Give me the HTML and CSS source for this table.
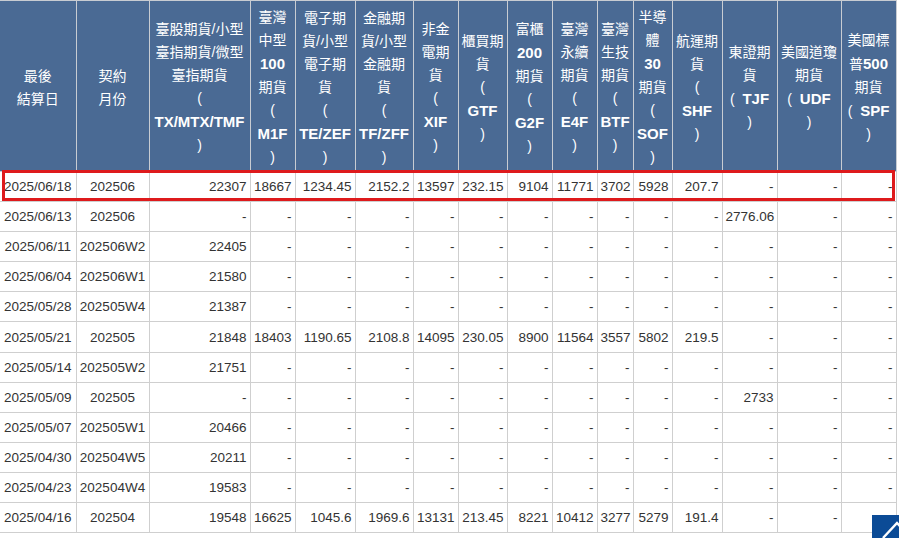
FILE: index.html
```html
<!DOCTYPE html>
<html lang="zh-Hant">
<head>
<meta charset="utf-8">
<title>最後結算價</title>
<link rel="stylesheet" href="styles.css">
</head>
<body>
<div class="wrap">
<table class="settle">
<colgroup>
<col class="w76"><col class="w73"><col class="w101"><col class="w45"><col class="w60"><col class="w58"><col class="w45"><col class="w49"><col class="w45"><col class="w45"><col class="w36"><col class="w39"><col class="w50"><col class="w55"><col class="w64"><col class="w55">
</colgroup>
<thead>
<tr class="head">
<th>最後<br>結算日</th>
<th>契約<br>月份</th>
<th>臺股期貨/小型<br>臺指期貨/微型<br>臺指期貨<br>(<br><b>TX/MTX/TMF</b><br>)</th>
<th>臺灣<br>中型<br><b>100</b><br>期貨<br>(<br><b>M1F</b><br>)</th>
<th>電子期<br>貨/小型<br>電子期<br>貨<br>(<br><b>TE/ZEF</b><br>)</th>
<th>金融期<br>貨/小型<br>金融期<br>貨<br>(<br><b>TF/ZFF</b><br>)</th>
<th>非金<br>電期<br>貨<br>(<br><b>XIF</b><br>)</th>
<th>櫃買期<br>貨<br>(<br><b>GTF</b><br>)</th>
<th>富櫃<br><b>200</b><br>期貨<br>(<br><b>G2F</b><br>)</th>
<th>臺灣<br>永續<br>期貨<br>(<br><b>E4F</b><br>)</th>
<th>臺灣<br>生技<br>期貨<br>(<br><b>BTF</b><br>)</th>
<th>半導<br>體<br><b>30</b><br>期貨<br>(<br><b>SOF</b><br>)</th>
<th>航運期<br>貨<br>(<br><b>SHF</b><br>)</th>
<th>東證期<br>貨<br>(&nbsp; <b>TJF</b><br>)</th>
<th>美國道瓊<br>期貨<br>(&nbsp; <b>UDF</b><br>)</th>
<th>美國標<br>普<b>500</b><br>期貨<br>(&nbsp; <b>SPF</b><br>)</th>
</tr>
</thead>
<tbody>
<tr><td class="ctr">2025/06/18</td><td class="ctr">202506</td><td>22307</td><td>18667</td><td>1234.45</td><td>2152.2</td><td>13597</td><td>232.15</td><td>9104</td><td>11771</td><td>3702</td><td>5928</td><td>207.7</td><td>-</td><td>-</td><td>-</td></tr>
<tr><td class="ctr">2025/06/13</td><td class="ctr">202506</td><td>-</td><td>-</td><td>-</td><td>-</td><td>-</td><td>-</td><td>-</td><td>-</td><td>-</td><td>-</td><td>-</td><td>2776.06</td><td>-</td><td>-</td></tr>
<tr><td class="ctr">2025/06/11</td><td class="ctr">202506W2</td><td>22405</td><td>-</td><td>-</td><td>-</td><td>-</td><td>-</td><td>-</td><td>-</td><td>-</td><td>-</td><td>-</td><td>-</td><td>-</td><td>-</td></tr>
<tr><td class="ctr">2025/06/04</td><td class="ctr">202506W1</td><td>21580</td><td>-</td><td>-</td><td>-</td><td>-</td><td>-</td><td>-</td><td>-</td><td>-</td><td>-</td><td>-</td><td>-</td><td>-</td><td>-</td></tr>
<tr><td class="ctr">2025/05/28</td><td class="ctr">202505W4</td><td>21387</td><td>-</td><td>-</td><td>-</td><td>-</td><td>-</td><td>-</td><td>-</td><td>-</td><td>-</td><td>-</td><td>-</td><td>-</td><td>-</td></tr>
<tr><td class="ctr">2025/05/21</td><td class="ctr">202505</td><td>21848</td><td>18403</td><td>1190.65</td><td>2108.8</td><td>14095</td><td>230.05</td><td>8900</td><td>11564</td><td>3557</td><td>5802</td><td>219.5</td><td>-</td><td>-</td><td>-</td></tr>
<tr><td class="ctr">2025/05/14</td><td class="ctr">202505W2</td><td>21751</td><td>-</td><td>-</td><td>-</td><td>-</td><td>-</td><td>-</td><td>-</td><td>-</td><td>-</td><td>-</td><td>-</td><td>-</td><td>-</td></tr>
<tr><td class="ctr">2025/05/09</td><td class="ctr">202505</td><td>-</td><td>-</td><td>-</td><td>-</td><td>-</td><td>-</td><td>-</td><td>-</td><td>-</td><td>-</td><td>-</td><td>2733</td><td>-</td><td>-</td></tr>
<tr><td class="ctr">2025/05/07</td><td class="ctr">202505W1</td><td>20466</td><td>-</td><td>-</td><td>-</td><td>-</td><td>-</td><td>-</td><td>-</td><td>-</td><td>-</td><td>-</td><td>-</td><td>-</td><td>-</td></tr>
<tr><td class="ctr">2025/04/30</td><td class="ctr">202504W5</td><td>20211</td><td>-</td><td>-</td><td>-</td><td>-</td><td>-</td><td>-</td><td>-</td><td>-</td><td>-</td><td>-</td><td>-</td><td>-</td><td>-</td></tr>
<tr><td class="ctr">2025/04/23</td><td class="ctr">202504W4</td><td>19583</td><td>-</td><td>-</td><td>-</td><td>-</td><td>-</td><td>-</td><td>-</td><td>-</td><td>-</td><td>-</td><td>-</td><td>-</td><td>-</td></tr>
<tr><td class="ctr">2025/04/16</td><td class="ctr">202504</td><td>19548</td><td>16625</td><td>1045.6</td><td>1969.6</td><td>13131</td><td>213.45</td><td>8221</td><td>10412</td><td>3277</td><td>5279</td><td>191.4</td><td>-</td><td>-</td><td>-</td></tr>
</tbody>
</table>
<div class="hl"></div>
</div>
<a class="totop" href="#top" aria-label="回到頂端"><svg width="45" height="45" viewBox="0 0 45 45"><path d="M11 23 L25 8 L39 23" fill="none" stroke="#fff" stroke-width="2.5"/></svg></a>
</body>
</html>
```
FILE: styles.css
```css
html, body {
  margin: 0;
  padding: 0;
}
body {
  background: #fff;
  font-family: "Liberation Sans", "Noto Sans CJK TC", sans-serif;
  overflow: hidden;
}
.wrap {
  position: relative;
  width: 899px;
}
.settle {
  border-collapse: collapse;
  table-layout: fixed;
  width: 896px;
}
.w76 { width: 76px; }
.w73 { width: 73px; }
.w101 { width: 101px; }
.w45 { width: 45px; }
.w60 { width: 60px; }
.w58 { width: 58px; }
.w49 { width: 49px; }
.w36 { width: 36px; }
.w39 { width: 39px; }
.w50 { width: 50px; }
.w55 { width: 55px; }
.w64 { width: 64px; }
.settle th {
  background: #4a6a94;
  color: #fff;
  font-weight: normal;
  font-size: 14px;
  line-height: 23px;
  border: 1px solid #c8ccd2;
  padding: 3px 0 0;
  text-align: center;
  vertical-align: middle;
  white-space: nowrap;
}
.settle th b {
  font-size: 15px;
  font-weight: bold;
}
.head {
  height: 171px;
}
.settle tbody tr {
  height: 30.1px;
}
.settle td {
  font-size: 13.5px;
  color: #333;
  border: 1px solid #cfcfcf;
  padding: 0 3px;
  text-align: right;
  vertical-align: middle;
  white-space: nowrap;
}
.settle td.ctr {
  text-align: center;
  padding: 0;
}
.settle th:first-child,
.settle td:first-child {
  border-left: none;
}
.hl {
  position: absolute;
  left: 2px;
  top: 170px;
  width: 887px;
  height: 25px;
  border: 3px solid #de1a1c;
  pointer-events: none;
}
.totop {
  position: fixed;
  left: 872px;
  top: 515px;
  width: 45px;
  height: 45px;
  background: #0b4b96;
  display: block;
}
.totop svg {
  display: block;
}
```
